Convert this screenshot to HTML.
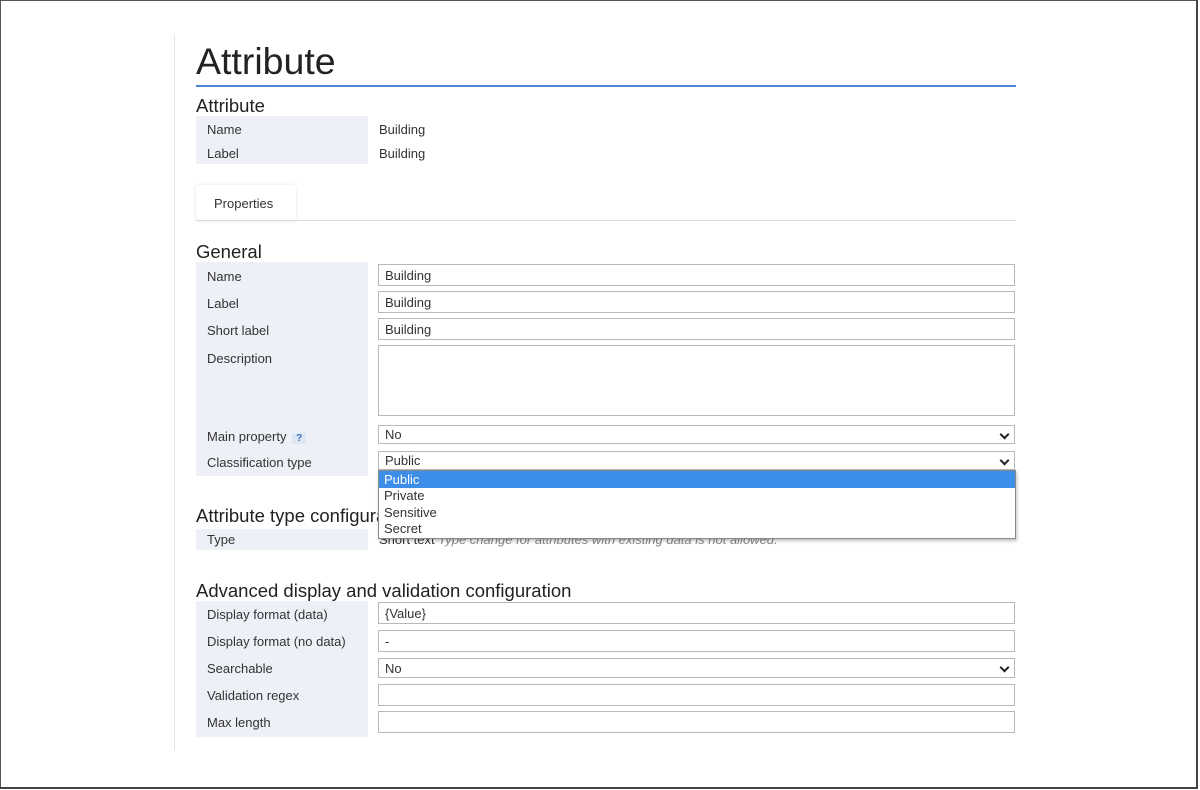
<!DOCTYPE html>
<html><head><meta charset="utf-8"><style>
*{margin:0;padding:0;box-sizing:border-box}
body{width:1200px;height:790px;background:#fff;font-family:"Liberation Sans",sans-serif;color:#333;position:relative;overflow:hidden}
.a{position:absolute}
.t{font-size:13px;color:#333}
.h{font-size:18.5px;color:#222}
.bg{background:#eef0f7;left:196px;width:172px}
.in{left:378px;width:637px;height:22px;border:1px solid #b5b9bf;background:#fff;font-size:13px;padding:3px 6px;color:#333}
.sel:after{content:"";position:absolute;right:6px;top:5px;width:5px;height:5px;border-right:2px solid #222;border-bottom:2px solid #222;transform:rotate(45deg)}
.lab{left:207px;font-size:13px;color:#333}
</style></head><body>
<div class="a" style="left:0;top:0;width:1198px;height:789px;border:1px solid #555;border-right:2px solid #444;border-bottom:2px solid #444"></div>
<div class="a" style="left:174px;top:35px;width:1px;height:715px;background:#e4e4e4"></div>
<div class="a" style="left:196px;top:40px;font-size:37.5px;color:#222">Attribute</div>
<div class="a" style="left:196px;top:85px;width:820px;height:2px;background:#4a86d4"></div>
<div class="a h" style="left:196px;top:95px">Attribute</div>
<div class="a bg" style="top:116px;height:48px"></div>
<div class="a lab" style="top:122px">Name</div><div class="a t" style="left:379px;top:122px">Building</div>
<div class="a lab" style="top:146px">Label</div><div class="a t" style="left:379px;top:146px">Building</div>
<div class="a" style="left:196px;top:185px;width:100px;height:36px;background:#fff;box-shadow:0 0 3px rgba(0,0,0,.12);border-radius:3px 3px 0 0"></div>
<div class="a t" style="left:214px;top:196px">Properties</div>
<div class="a" style="left:196px;top:220px;width:820px;height:1px;background:#ddd"></div>
<div class="a h" style="left:196px;top:241px">General</div>
<div class="a bg" style="top:262px;height:214px"></div>
<div class="a lab" style="top:269px">Name</div><div class="a in" style="top:264px">Building</div>
<div class="a lab" style="top:296px">Label</div><div class="a in" style="top:291px">Building</div>
<div class="a lab" style="top:323px">Short label</div><div class="a in" style="top:318px">Building</div>
<div class="a lab" style="top:351px">Description</div><div class="a in" style="top:345px;height:71px"></div>
<div class="a lab" style="top:429px">Main property <span style="display:inline-block;background:#dde6f3;color:#3b6fc4;font-size:10px;font-weight:bold;padding:0 4px;margin-left:2px">?</span></div>
<div class="a in sel" style="top:425px;height:19px;padding:1px 6px">No</div>
<div class="a lab" style="top:455px">Classification type</div>
<div class="a in sel" style="top:451px;height:19px;padding:1px 6px">Public</div>
<div class="a h" style="left:196px;top:505px">Attribute type configuration</div>
<div class="a bg" style="top:529px;height:21px"></div>
<div class="a lab" style="top:532px">Type</div>
<div class="a" style="left:379px;top:532px;font-size:13px;color:#333">Short text <i style="color:#888">Type change for attributes with existing data is not allowed.</i></div>
<div class="a" style="left:378px;top:470px;width:638px;height:69px;background:#fff;border:1px solid #888;box-shadow:1px 2px 3px rgba(0,0,0,.25);font-size:13px">
<div style="background:#3d8ee8;color:#fff;height:17px;padding:1px 5px">Public</div>
<div style="height:16.5px;padding:0 5px">Private</div>
<div style="height:16.5px;padding:0 5px">Sensitive</div>
<div style="height:16.5px;padding:0 5px">Secret</div>
</div>
<div class="a h" style="left:196px;top:580px">Advanced display and validation configuration</div>
<div class="a bg" style="top:601px;height:136px"></div>
<div class="a lab" style="top:607px">Display format (data)</div><div class="a in" style="top:602px">{Value}</div>
<div class="a lab" style="top:634px">Display format (no data)</div><div class="a in" style="top:630px">-</div>
<div class="a lab" style="top:661px">Searchable</div><div class="a in sel" style="top:658px;height:20px;padding:2px 6px">No</div>
<div class="a lab" style="top:688px">Validation regex</div><div class="a in" style="top:684px"></div>
<div class="a lab" style="top:715px">Max length</div><div class="a in" style="top:711px"></div>
</body></html>
